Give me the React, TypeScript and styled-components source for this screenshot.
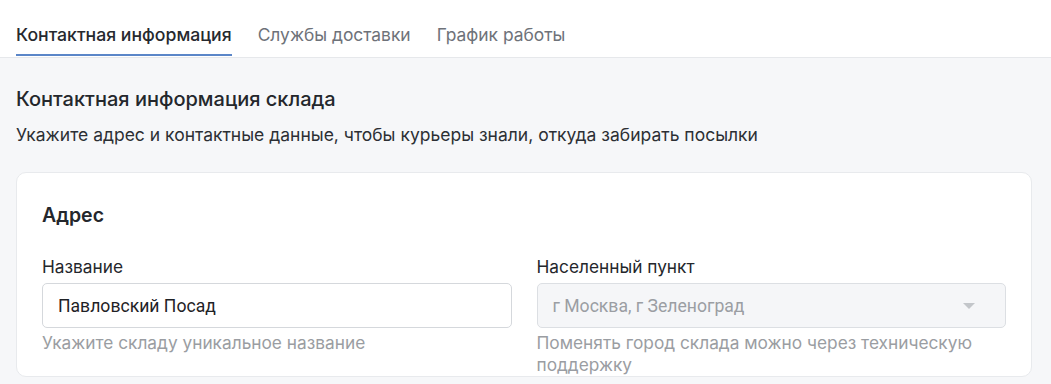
import React from 'react';
import styled, { createGlobalStyle } from 'styled-components';

const GlobalStyle = createGlobalStyle`
  html, body {
    margin: 0;
    padding: 0;
    background: #f6f7f9;
    font-family: Inter, 'Noto Sans', sans-serif;
    color: #24272c;
  }
  * {
    box-sizing: border-box;
  }
`;

const Page = styled.div`
  min-height: 384px;
  background: #f6f7f9;
`;

const TabBar = styled.div`
  display: flex;
  gap: 26px;
  padding: 0 16px;
  background: #ffffff;
  border-bottom: 1px solid #e6e8eb;
  height: 58px;
`;

const Tab = styled.div<{ $active?: boolean }>`
  display: flex;
  align-items: center;
  padding-top: 15px;
  font-size: ${(p) => (p.$active ? '17.65px' : '17.4px')};
  font-weight: ${(p) => (p.$active ? 500 : 400)};
  color: ${(p) => (p.$active ? '#26292e' : '#6e7279')};
  border-bottom: 2px solid ${(p) => (p.$active ? '#5b86c8' : 'transparent')};
  margin-bottom: 1px;
  cursor: pointer;
`;

const Content = styled.div`
  padding: 27px 19px 0 16px;
`;

const Title = styled.h2`
  margin: 0;
  font-size: 20px;
  font-weight: 500;
  line-height: 28px;
`;

const Subtitle = styled.p`
  margin: 10px 0 0;
  font-size: 17.5px;
  line-height: 24px;
  color: #2c2f34;
`;

const Card = styled.div`
  margin-top: 25px;
  background: #ffffff;
  border: 1px solid #e8eaed;
  border-radius: 10px;
  padding: 28px 25px 0;
`;

const CardTitle = styled.h3`
  margin: 0;
  font-size: 19.5px;
  font-weight: 600;
  line-height: 28px;
`;

const FieldsRow = styled.div`
  display: grid;
  grid-template-columns: 1fr 1fr;
  gap: 25px;
  margin-top: 26px;
`;

const Field = styled.div`
  display: flex;
  flex-direction: column;
`;

const Label = styled.label`
  font-size: 17.3px;
  line-height: 24px;
  margin-bottom: 4px;
`;

const Input = styled.input`
  height: 45px;
  border: 1px solid #d5d8dc;
  border-radius: 5px;
  padding: 0 15px;
  font-family: Roboto, sans-serif;
  font-size: 17.6px;
  color: #1f2226;
  background: #ffffff;
  outline: none;
`;

const SelectBox = styled.div`
  height: 45px;
  display: flex;
  align-items: center;
  justify-content: space-between;
  border: 1px solid #dcdfe3;
  border-radius: 5px;
  padding: 0 30px 0 15px;
  font-family: Roboto, sans-serif;
  font-size: 17.6px;
  color: #9b9ea3;
  background: #f5f6f8;
`;

const Arrow = styled.span`
  width: 0;
  height: 0;
  border-left: 6px solid transparent;
  border-right: 6px solid transparent;
  border-top: 6px solid #c3c6ca;
`;

const Hint = styled.div`
  margin-top: 4px;
  font-size: 17.3px;
  line-height: 22px;
  color: #9a9da2;
`;

export default function App() {
  return (
    <Page>
      <GlobalStyle />
      <TabBar>
        <Tab $active>Контактная информация</Tab>
        <Tab>Службы доставки</Tab>
        <Tab>График работы</Tab>
      </TabBar>
      <Content>
        <Title>Контактная информация склада</Title>
        <Subtitle>
          Укажите адрес и контактные данные, чтобы курьеры знали, откуда забирать посылки
        </Subtitle>
        <Card>
          <CardTitle>Адрес</CardTitle>
          <FieldsRow>
            <Field>
              <Label>Название</Label>
              <Input defaultValue="Павловский Посад" />
              <Hint>Укажите складу уникальное название</Hint>
            </Field>
            <Field>
              <Label>Населенный пункт</Label>
              <SelectBox>
                г Москва, г Зеленоград
                <Arrow />
              </SelectBox>
              <Hint>Поменять город склада можно через техническую поддержку</Hint>
            </Field>
          </FieldsRow>
        </Card>
      </Content>
    </Page>
  );
}
